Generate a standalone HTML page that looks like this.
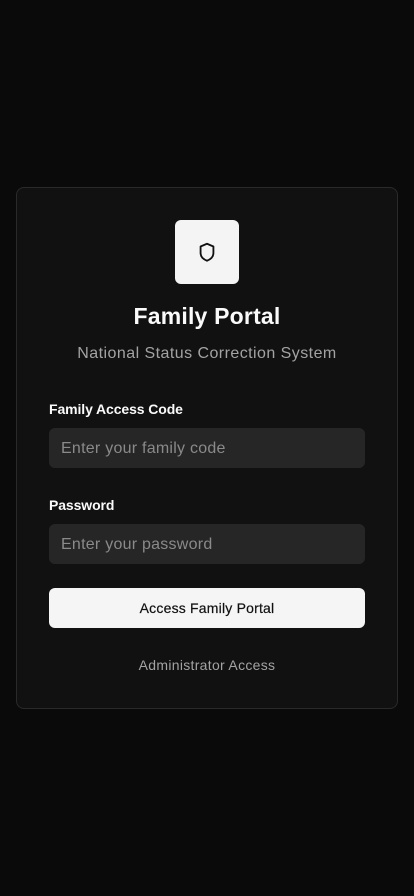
<!DOCTYPE html>
<html><head><meta charset="utf-8"><style>
*{box-sizing:border-box;margin:0;padding:0}
body{width:414px;height:896px;background:#0a0a0a;font-family:"Liberation Sans",sans-serif;position:relative;overflow:hidden}
.card{position:absolute;left:16px;top:187px;width:382px;height:522px;background:#111;border:1px solid #2a2a2a;border-radius:8px}
.icon{position:absolute;left:158px;top:32px;width:64px;height:64px;background:#f4f4f4;border-radius:6px;display:flex;align-items:center;justify-content:center}
.t{position:absolute;left:0;right:0;text-align:center}
.title{top:115px;font-size:23px;font-weight:bold;color:#fafafa;letter-spacing:0.2px}
.sub{top:157px;font-size:16px;color:#a3a3a3;letter-spacing:0.45px}
.lab{position:absolute;left:32px;font-size:14px;font-weight:bold;color:#fafafa;letter-spacing:-0.1px}
.inp{position:absolute;left:32px;width:316px;height:40px;background:#262626;border-radius:6px;color:#8a8a8a;font-size:16px;padding:10px 12px;line-height:21px;letter-spacing:0.25px}
.btn{position:absolute;left:32px;top:400px;width:316px;height:40px;background:#f5f5f5;border-radius:6px;color:#111;font-size:14px;text-align:center;line-height:40px;letter-spacing:0.2px;-webkit-text-stroke:0.2px #111}
.adm{top:469px;font-size:14px;color:#a3a3a3;letter-spacing:0.3px}
</style></head><body>
<div class="card">
<div class="icon"><svg width="22" height="24" viewBox="0 0 24 24" fill="none" stroke="#111" stroke-width="2" stroke-linejoin="round"><path d="M12 3 L19 6 V13 C19 17 16 20 12 21.5 C8 20 5 17 5 13 V6 Z"/></svg></div>
<div class="t title">Family Portal</div>
<div class="t sub">National Status Correction System</div>
<div class="lab" style="top:213px">Family Access Code</div>
<div class="inp" style="top:240px">Enter your family code</div>
<div class="lab" style="top:309px">Password</div>
<div class="inp" style="top:336px">Enter your password</div>
<div class="btn">Access Family Portal</div>
<div class="t adm">Administrator Access</div>
</div>
</body></html>
